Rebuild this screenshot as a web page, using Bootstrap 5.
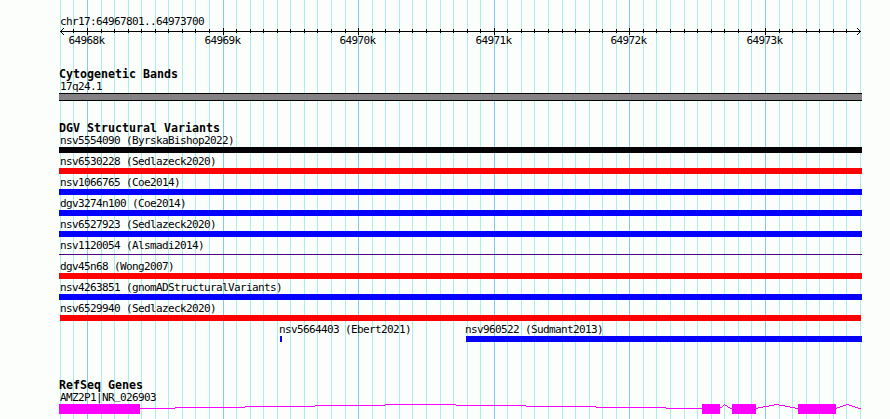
<!DOCTYPE html>
<html lang="en">
<head>
    <meta charset="UTF-8">
    <meta name="viewport" content="width=device-width, initial-scale=1.0">
    <title>chr17:64967801..64973700</title>
    <link rel="stylesheet" href="https://cdn.jsdelivr.net/npm/bootstrap@5.3.0/dist/css/bootstrap.min.css">
    <style>
        body {
            background: #fcfefc;
            color: #000;
            font-family: "DejaVu Sans Mono", "Liberation Mono", monospace;
            font-size: 11px;
            line-height: 11px;
            letter-spacing: -0.622px;
        }
        .genome-view { width: 890px; height: 419px; padding: 16px 28px 0 59px; }
        .grid-lines { z-index: 0; }
        .tracks { z-index: 1; }
        svg { shape-rendering: crispEdges; }
        .feature-label { height: 12px; padding-left: 1px; white-space: pre; }
        .raised { vertical-align: 2px; line-height: 1px; }
        .track-title { height: 12px; font-size: 11.63px; letter-spacing: 0; white-space: pre; }
        .scale-axis { height: 7px; }
        .scale-numbers { height: 11px; margin-bottom: 23px; }
        .scale-numbers text { font-size: 11px; }
        .cytoband { height: 8px; margin-bottom: 22px; background: #848284; border: solid #000; border-width: 1px 0; }
        .variant { height: 21px; }
        .variant-bar { height: 6px; }
        .variant-line { height: 1px; margin-top: 2px; background: #4b0082; }
        .bar-black { background: #040204; }
        .bar-red { background: #fc0204; }
        .bar-blue { background: #0402fc; }
        .inset-bar { margin: 0 1px; }
        .shared-row { margin-bottom: 35px; }
        .gap-before-ebert { width: 220px; }
        .ebert { width: 186px; }
        .ebert .variant-bar { width: 2px; margin-left: 1px; }
        .ebert .feature-label, .sudmant .feature-label { padding-left: 0; }
        .sudmant .variant-bar { margin-left: 1px; }
    </style>
</head>
<body>

<div class="genome-view position-relative overflow-hidden">
    <svg class="grid-lines position-absolute top-0 start-0" id="gridLines" width="890" height="419"></svg>

    <div class="tracks position-relative d-flex flex-column">
        <div class="feature-label">chr17:64967801..64973700</div>
        <svg class="scale-axis d-block" id="scaleAxis" width="803" height="7"></svg>
        <svg class="scale-numbers d-block" id="scaleNumbers" width="803" height="11"></svg>

        <div class="track-title fw-bold">Cytogenetic Bands</div>
        <div class="feature-label">17q24.1</div>
        <div class="cytoband"></div>

        <div class="track-title fw-bold">DGV Structural Variants</div>
        <div id="variants"></div>
        <div class="shared-row variant d-flex">
            <div class="gap-before-ebert"></div>
            <div class="ebert">
                <div class="feature-label">nsv5664403 (Ebert2021)</div>
                <div class="variant-bar bar-blue"></div>
            </div>
            <div class="sudmant flex-grow-1">
                <div class="feature-label">nsv960522 (Sudmant2013)</div>
                <div class="variant-bar bar-blue"></div>
            </div>
        </div>

        <div class="track-title fw-bold">RefSeq Genes</div>
        <div class="feature-label">AMZ2P1|NR<span class="raised">_</span>026903</div>
        <svg class="d-block" width="803" height="10" fill="#fc02fc">
            <!-- exons -->
            <path d="M0 0h81v10H0zM643 0h18v10h-18zM673 0h24v10h-24zM739 0h38v10h-38z"/>
            <!-- introns, stepped one pixel at a time -->
            <path d="M81 4h35v1H81zM116 3h70v1h-70zM186 2h70v1h-70zM256 1h70v1h-70zM326 0h71v1h-71zM397 1h70v1h-70zM467 2h70v1h-70zM537 3h70v1h-70zM607 4h36v1h-36z"/>
            <path d="M661 3h2v1h-2zM663 2h1v1h-1zM664 1h1v1h-1zM665 0h1v1h-1zM666 1h2v1h-2zM668 2h1v1h-1zM669 3h2v1h-2zM671 4h2v1h-2z"/>
            <path d="M697 4h2v1h-2zM699 3h5v1h-5zM704 2h6v1h-6zM710 1h5v1h-5zM715 0h5v1h-5zM720 1h6v1h-6zM726 2h5v1h-5zM731 3h5v1h-5zM736 4h3v1h-3z"/>
            <path d="M777 4h1v1h-1zM778 3h3v1h-3zM781 2h3v1h-3zM784 1h3v1h-3zM787 0h3v1h-3zM790 1h3v1h-3zM793 2h3v1h-3zM796 3h3v1h-3zM799 4h3v1h-3z"/>
        </svg>
    </div>
</div>

<script src="https://cdn.jsdelivr.net/npm/bootstrap@5.3.0/dist/js/bootstrap.bundle.min.js"></script>
<script>
const start = 64967801;
const end = 64973700;
const pxPerBase = 800 / (end - start + 1);
const trackLeft = 59;

function toX(pos) {
    return Math.round(60 + (pos - start) * pxPerBase);
}

let lines = '';
let ticks = '<rect x="1" y="3" width="801" height="1"/>' +
    '<path d="M1 3h1v1h-1zM2 2h1v3h-1zM3 1h1v1h-1zM3 5h1v1h-1zM4 0h1v1h-1zM4 6h1v1h-1z"/>' +
    '<path d="M801 3h1v1h-1zM800 2h1v3h-1zM799 1h1v1h-1zM799 5h1v1h-1zM798 0h1v1h-1zM798 6h1v1h-1z"/>';
let numbers = '';

for (let pos = 64967800; pos <= end; pos += 100) {
    const x = toX(pos);
    const major = pos % 1000 === 0;
    lines += `<rect x="${x}" y="0" width="1" height="419" fill="${major ? '#84caec' : '#aceeec'}"/>`;
    if (x > 64 && x < 858) {
        ticks += `<rect x="${x - trackLeft}" y="${major ? 0 : 1}" width="1" height="${major ? 7 : 4}"/>`;
    }
    if (major) {
        numbers += `<text x="${x - 18.5 - trackLeft}" y="9">${pos / 1000}k</text>`;
    }
}
document.getElementById('gridLines').innerHTML = lines;
document.getElementById('scaleAxis').innerHTML = ticks;
document.getElementById('scaleNumbers').innerHTML = numbers;

const variants = [
    ['nsv5554090 (ByrskaBishop2022)', 'variant-bar bar-black'],
    ['nsv6530228 (Sedlazeck2020)', 'variant-bar bar-red'],
    ['nsv1066765 (Coe2014)', 'variant-bar bar-blue'],
    ['dgv3274n100 (Coe2014)', 'variant-bar bar-blue'],
    ['nsv6527923 (Sedlazeck2020)', 'variant-bar bar-blue'],
    ['nsv1120054 (Alsmadi2014)', 'variant-line'],
    ['dgv45n68 (Wong2007)', 'variant-bar bar-red'],
    ['nsv4263851 (gnomADStructuralVariants)', 'variant-bar bar-blue'],
    ['nsv6529940 (Sedlazeck2020)', 'variant-bar bar-red inset-bar']
];

document.getElementById('variants').innerHTML = variants.map(([name, bar]) => `
    <div class="variant d-flex flex-column">
        <div class="feature-label">${name}</div>
        <div class="${bar}"></div>
    </div>`).join('');
</script>

</body>
</html>
